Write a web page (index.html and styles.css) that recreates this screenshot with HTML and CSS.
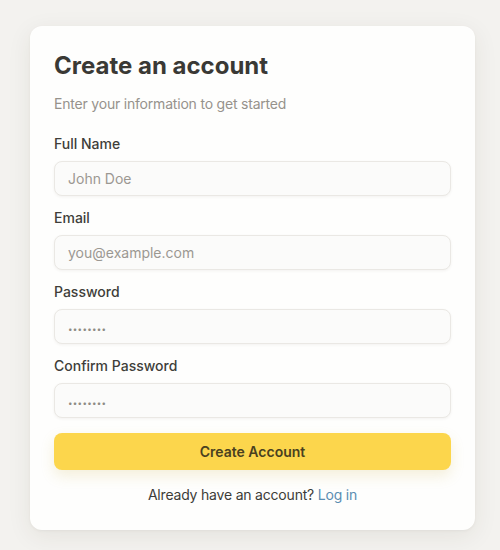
FILE: index.html
```html
<!DOCTYPE html>
<html lang="en">
<head>
<meta charset="utf-8">
<title>Create an account</title>
<link rel="stylesheet" href="styles.css">
</head>
<body>
<main class="page">
  <form class="card">
    <h1 class="title">Create an account</h1>
    <p class="subtitle">Enter your information to get started</p>
    <div class="fields">
      <label class="field">
        <span class="label">Full Name</span>
        <input class="input" type="text" placeholder="John Doe">
      </label>
      <label class="field">
        <span class="label">Email</span>
        <input class="input" type="email" placeholder="you@example.com">
      </label>
      <label class="field">
        <span class="label">Password</span>
        <input class="input input-secret" type="password" placeholder="••••••••">
      </label>
      <label class="field">
        <span class="label">Confirm Password</span>
        <input class="input input-secret" type="password" placeholder="••••••••">
      </label>
    </div>
    <button class="submit" type="button">Create Account</button>
    <p class="footer">Already have an account? <a class="link" href="#">Log in</a></p>
  </form>
</main>
</body>
</html>
```
FILE: styles.css
```css
* { box-sizing: border-box; }
html, body { margin: 0; padding: 0; }
body {
  background: #f3f2ef;
  font-family: Inter, "Noto Sans", "Liberation Sans", sans-serif;
  color: #3b3a36;
}
.page {
  padding: 26px 25px 20px 30px;
}
.card {
  width: 445px;
  background: #fefefd;
  border-radius: 12px;
  padding: 24px 24px 25px;
  box-shadow: 0 6px 24px rgba(60, 50, 30, 0.08), 0 1px 3px rgba(60, 50, 30, 0.05);
  display: flex;
  flex-direction: column;
}
.title {
  margin: 0;
  font-size: 24px;
  line-height: 32px;
  font-weight: 700;
  color: #3a3935;
  letter-spacing: 0;
}
.subtitle {
  margin: 12px 0 20px;
  font-size: 14px;
  line-height: 20px;
  color: #96928c;
  letter-spacing: -0.2px;
}
.fields {
  display: flex;
  flex-direction: column;
  gap: 12px;
}
.field {
  display: flex;
  flex-direction: column;
  gap: 7px;
}
.label {
  font-size: 14px;
  line-height: 20px;
  font-weight: 500;
  color: #3f3e3a;
}
.input {
  height: 35px;
  width: 100%;
  border: 1px solid #eae8e4;
  border-radius: 8px;
  background: #fbfbfa;
  padding: 0 13px;
  font-family: inherit;
  font-size: 14px;
  color: #3b3a36;
  box-shadow: 0 1px 3px rgba(60, 50, 30, 0.06);
  outline: none;
}
.input::placeholder { color: #9b9892; }
.input-secret::placeholder {
  font-size: 8px;
  letter-spacing: 0.3px;
  color: #8e8b85;
}
.submit {
  margin-top: 15px;
  height: 37px;
  border: 0;
  border-radius: 8px;
  background: #fcd64c;
  color: #4a4120;
  font-family: inherit;
  font-size: 14px;
  font-weight: 600;
  box-shadow: 0 6px 14px rgba(200, 170, 60, 0.18);
  cursor: pointer;
}
.footer {
  margin: 15px 0 0;
  text-align: center;
  font-size: 14px;
  line-height: 20px;
  color: #3d3c38;
  letter-spacing: -0.2px;
}
.link {
  color: #5a8db2;
  text-decoration: none;
}
```
